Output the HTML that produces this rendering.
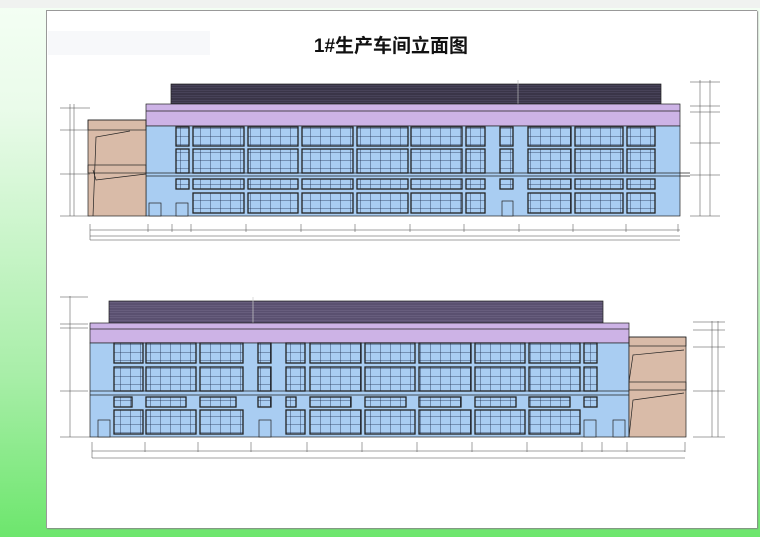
<!DOCTYPE html>
<html><head><meta charset="utf-8"><style>
html,body{margin:0;padding:0;width:760px;height:537px;overflow:hidden;background:#e8f5e8}
.bg{position:absolute;left:0;top:0;width:760px;height:537px;background:linear-gradient(#f4fff4,#eafbea 20%,#a8eea8 70%,#6de66d)}
.top{position:absolute;left:0;top:0;width:760px;height:8px;background:#f0f2f0}
.panel{position:absolute;left:46px;top:10px;width:710px;height:517px;background:#fff;border-left:1px solid #999;border-top:1px solid #999;box-shadow:1px 1px 1px #888}
.t{position:absolute;left:0;top:31px;width:782px;text-align:center;font:bold 19px "Liberation Sans","Noto Sans CJK SC",sans-serif;color:#111}
.ghost{position:absolute;left:48px;top:31px;width:162px;height:24px;background:#f7f8fa}
svg{position:absolute;left:0;top:0}
</style></head><body>
<div class="bg"></div><div class="top"></div>
<div class="panel"></div>
<div class="ghost"></div>
<div class="t">1#生产车间立面图</div>
<svg width="760" height="537" viewBox="0 0 760 537">
<defs>
<pattern id="w" width="10" height="8" patternUnits="userSpaceOnUse"><rect width="10" height="8" fill="#a9cdf2"/><path d="M0 0H10M0 0V8" stroke="#1a2a4a" stroke-width="0.8"/></pattern>
<pattern id="r" width="4" height="2.5" patternUnits="userSpaceOnUse"><rect width="4" height="2.5" fill="#3a3548"/><path d="M0 0H4" stroke="#5a5470" stroke-width="0.8"/></pattern>
<pattern id="r2" width="4" height="2.5" patternUnits="userSpaceOnUse"><rect width="4" height="2.5" fill="#5a5070"/><path d="M0 0H4" stroke="#7a7090" stroke-width="0.8"/></pattern>
</defs>
<g stroke="#222" stroke-width="0.7">
<rect x="171" y="84" width="490" height="20" fill="url(#r)"/>
<line x1="518" y1="80" x2="518" y2="104" stroke="#bbb"/>
<rect x="146" y="104" width="534" height="22" fill="#cdb3e6"/>
<line x1="146" y1="111" x2="680" y2="111"/>
<rect x="146" y="126" width="534" height="90" fill="#a9cdf2"/>
<rect x="88" y="120" width="58" height="96" fill="#d9bba8"/>
<rect x="88" y="120" width="58" height="10" fill="none"/><rect x="88" y="165" width="58" height="8" fill="none"/>
<path d="M93 216L96 137L130 131M93 170L96 180L146 174" fill="none"/>
<line x1="146" y1="173" x2="690" y2="173"/><line x1="146" y1="176" x2="690" y2="176"/>
<g fill="url(#w)" stroke-width="1.3">
<rect x="176" y="127" width="13" height="19"/><rect x="193" y="127" width="51" height="19"/><rect x="248" y="127" width="50" height="19"/><rect x="302" y="127" width="51" height="19"/><rect x="357" y="127" width="51" height="19"/><rect x="411" y="127" width="51" height="19"/><rect x="466" y="127" width="19" height="19"/><rect x="500" y="127" width="13" height="19"/><rect x="528" y="127" width="43" height="19"/><rect x="575" y="127" width="48" height="19"/><rect x="627" y="127" width="28" height="19"/>
<rect x="176" y="149" width="13" height="24"/><rect x="193" y="149" width="51" height="24"/><rect x="248" y="149" width="50" height="24"/><rect x="302" y="149" width="51" height="24"/><rect x="357" y="149" width="51" height="24"/><rect x="411" y="149" width="51" height="24"/><rect x="466" y="149" width="19" height="24"/><rect x="500" y="149" width="13" height="24"/><rect x="528" y="149" width="43" height="24"/><rect x="575" y="149" width="48" height="24"/><rect x="627" y="149" width="28" height="24"/>
<rect x="176" y="179" width="13" height="10"/><rect x="193" y="179" width="51" height="10"/><rect x="248" y="179" width="50" height="10"/><rect x="302" y="179" width="51" height="10"/><rect x="357" y="179" width="51" height="10"/><rect x="411" y="179" width="51" height="10"/><rect x="466" y="179" width="19" height="10"/><rect x="500" y="179" width="13" height="10"/><rect x="528" y="179" width="43" height="10"/><rect x="575" y="179" width="48" height="10"/><rect x="627" y="179" width="28" height="10"/>
<rect x="193" y="193" width="51" height="20"/><rect x="248" y="193" width="50" height="20"/><rect x="302" y="193" width="51" height="20"/><rect x="357" y="193" width="51" height="20"/><rect x="411" y="193" width="51" height="20"/><rect x="466" y="193" width="19" height="20"/><rect x="528" y="193" width="43" height="20"/><rect x="575" y="193" width="48" height="20"/><rect x="627" y="193" width="28" height="20"/>
</g>
<rect x="149" y="203" width="12" height="13" fill="#a9cdf2"/><rect x="176" y="203" width="12" height="13" fill="#a9cdf2"/><rect x="502" y="201" width="11" height="15" fill="#a9cdf2"/>
<g fill="none" stroke="#444" stroke-width="0.5">
<path d="M90 224V240H680M90 230H680M90 236H680"/>
<path d="M148 224V232M172 224V232M191 224V232M246 224V232M301 224V232M355 224V232M410 224V232M464 224V232M519 224V232M573 224V232M626 224V232M678 224V232"/>
<path d="M70 104V216M74 104V216M60 108H90M60 130H90M60 174H90M60 216H90"/>
<path d="M700 80V216M710 80V216M690 82H720M690 106H720M690 112H720M690 143H720M690 175H720M690 216H720"/>
</g>
<rect x="109" y="301" width="494" height="22" fill="url(#r2)"/>
<line x1="253" y1="297" x2="253" y2="323" stroke="#ccc"/>
<rect x="90" y="323" width="539" height="20" fill="#cdb3e6"/>
<line x1="90" y1="329" x2="629" y2="329"/>
<rect x="90" y="343" width="539" height="94" fill="#a9cdf2"/>
<rect x="629" y="337" width="57" height="100" fill="#d9bba8"/>
<rect x="629" y="337" width="57" height="9" fill="none"/><rect x="629" y="382" width="57" height="8" fill="none"/>
<path d="M629 382L633 355L684 350M629 437L633 400L684 393" fill="none"/>
<line x1="90" y1="391" x2="629" y2="391"/><line x1="90" y1="395" x2="629" y2="395"/>
<g fill="url(#w)" stroke-width="1.3">
<rect x="114" y="343" width="29" height="20"/><rect x="146" y="343" width="50" height="20"/><rect x="200" y="343" width="43" height="20"/><rect x="258" y="343" width="13" height="20"/><rect x="286" y="343" width="19" height="20"/><rect x="310" y="343" width="51" height="20"/><rect x="365" y="343" width="50" height="20"/><rect x="419" y="343" width="52" height="20"/><rect x="475" y="343" width="50" height="20"/><rect x="529" y="343" width="51" height="20"/><rect x="584" y="343" width="13" height="20"/>
<rect x="114" y="367" width="29" height="24"/><rect x="146" y="367" width="50" height="24"/><rect x="200" y="367" width="43" height="24"/><rect x="258" y="367" width="13" height="24"/><rect x="286" y="367" width="19" height="24"/><rect x="310" y="367" width="51" height="24"/><rect x="365" y="367" width="50" height="24"/><rect x="419" y="367" width="52" height="24"/><rect x="475" y="367" width="50" height="24"/><rect x="529" y="367" width="51" height="24"/><rect x="584" y="367" width="13" height="24"/>
<rect x="114" y="397" width="18" height="10"/><rect x="146" y="397" width="40" height="10"/><rect x="200" y="397" width="36" height="10"/><rect x="258" y="397" width="13" height="10"/><rect x="286" y="397" width="10" height="10"/><rect x="310" y="397" width="41" height="10"/><rect x="365" y="397" width="41" height="10"/><rect x="419" y="397" width="42" height="10"/><rect x="475" y="397" width="41" height="10"/><rect x="529" y="397" width="41" height="10"/><rect x="584" y="397" width="13" height="10"/>
<rect x="114" y="410" width="29" height="24"/><rect x="146" y="410" width="50" height="24"/><rect x="200" y="410" width="43" height="24"/><rect x="286" y="410" width="19" height="24"/><rect x="310" y="410" width="51" height="24"/><rect x="365" y="410" width="50" height="24"/><rect x="419" y="410" width="52" height="24"/><rect x="475" y="410" width="50" height="24"/><rect x="529" y="410" width="51" height="24"/>
</g>
<rect x="98" y="420" width="12" height="17" fill="#a9cdf2"/><rect x="259" y="420" width="12" height="17" fill="#a9cdf2"/><rect x="584" y="420" width="12" height="17" fill="#a9cdf2"/><rect x="613" y="420" width="12" height="17" fill="#a9cdf2"/>
<g fill="none" stroke="#444" stroke-width="0.5">
<path d="M92 442V458H685M92 451H685"/>
<path d="M145 442V452M198 442V452M251 442V452M307 442V452M362 442V452M417 442V452M472 442V452M527 442V452M582 442V452M602 442V452M627 442V452M685 442V452"/>
<path d="M70 296V437M60 297H88M60 324H88M60 328H88M60 391H88M60 437H90"/>
<path d="M712 321V437M718 321V437M693 322H725M693 330H725M693 347H725M693 391H725M693 437H725"/>
</g>
</g>
</svg>
</body></html>
